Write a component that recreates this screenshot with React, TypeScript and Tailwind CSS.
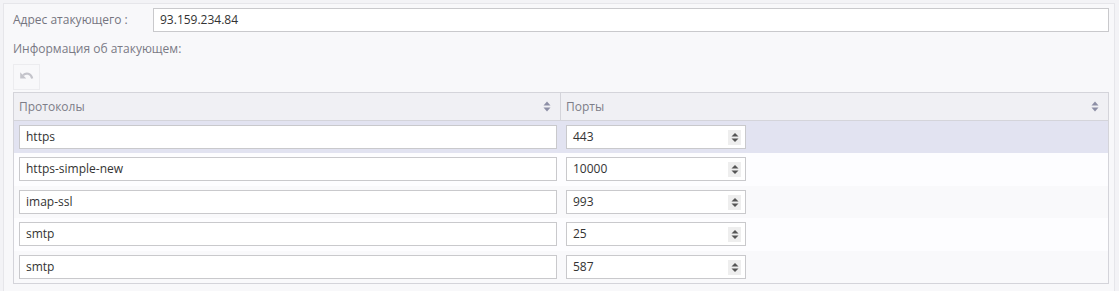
import React from 'react'

const rows = [
  { proto: 'https', port: '443' },
  { proto: 'https-simple-new', port: '10000' },
  { proto: 'imap-ssl', port: '993' },
  { proto: 'smtp', port: '25' },
  { proto: 'smtp', port: '587' },
]

function SortIcon() {
  return (
    <svg width="8" height="11" viewBox="0 0 8 11" className="flex-shrink-0">
      <path d="M4 0.5 L7.5 4.5 H0.5 Z" fill="#8d8fa6" />
      <path d="M4 10.5 L7.5 6.5 H0.5 Z" fill="#8d8fa6" />
    </svg>
  )
}

function Spinner() {
  return (
    <div className="w-[13px] h-[15px] bg-[#eeeeee] flex items-center justify-center">
      <svg width="8" height="11" viewBox="0 0 8 11">
        <path d="M4 1 L7.5 4.5 H0.5 Z" fill="#555" />
        <path d="M4 10 L7.5 6.5 H0.5 Z" fill="#555" />
      </svg>
    </div>
  )
}

export default function App() {
  return (
    <div className="w-[1119px] h-[291px] bg-[#f3f3f6] pt-[3px] pl-[3px] pr-[4px] font-['Open_Sans',sans-serif] text-[12px]">
      <div className="h-[288px] bg-[#f8f8fa] border-t border-l border-r border-[#e6e6ea] pl-[9px] pr-[5px] pt-[4px]">
        <div className="flex items-center h-[24px]">
          <div className="w-[140px] text-[#75757f]">Адрес атакующего :</div>
          <div className="flex-1 h-[24px] bg-white border border-[#c9c9cc] flex items-center px-[6px] text-[#333]">
            93.159.234.84
          </div>
        </div>
        <div className="mt-[9px] h-[16px] leading-[16px] text-[#7a7a85]">Информация об атакующем:</div>
        <div className="mt-[7px] w-[27px] h-[26px] border border-[#ececef] bg-[#f8f8fa] flex items-center justify-center">
          <svg width="15" height="12" viewBox="0 0 15 12">
            <path d="M4 4.2 C7 1.5 12 2 13.2 7.5" fill="none" stroke="#c4c4cb" strokeWidth="2.2" />
            <path d="M1.2 1.2 V7.4 H7.2 Z" fill="#c4c4cb" />
          </svg>
        </div>
        <div className="mt-[2px] border border-[#d4d4da] bg-[#fcfcfe]">
          <div className="flex h-[28px] bg-[#f0f0f4] border-b border-[#d4d4da] text-[#7d7d88]">
            <div className="w-[547px] flex items-center justify-between pl-[5px] pr-[9px] border-r border-[#d4d4da]">
              <span>Протоколы</span>
              <SortIcon />
            </div>
            <div className="flex-1 flex items-center justify-between pl-[5px] pr-[9px]">
              <span>Порты</span>
              <SortIcon />
            </div>
          </div>
          {rows.map((r, i) => (
            <div
              key={i}
              className={
                'flex items-start pt-[4px] ' +
                (i % 2 === 0 ? 'h-[32px] ' : 'h-[33px] ') +
                (i === 0 ? 'bg-[#e2e3f1]' : i % 2 === 1 ? 'bg-[#fdfdff]' : 'bg-[#f9f9fb]')
              }
            >
              <div className="w-[547px] pl-[5px] pr-[4px]">
                <div className="h-[24px] bg-white border border-[#c9c9cc] flex items-center px-[6px] text-[#333]">
                  {r.proto}
                </div>
              </div>
              <div className="pl-[5px]">
                <div className="w-[180px] h-[24px] bg-white border border-[#c9c9cc] flex items-center justify-between pl-[6px] pr-[4px] text-[#333]">
                  <span>{r.port}</span>
                  <Spinner />
                </div>
              </div>
            </div>
          ))}
        </div>
      </div>
    </div>
  )
}
